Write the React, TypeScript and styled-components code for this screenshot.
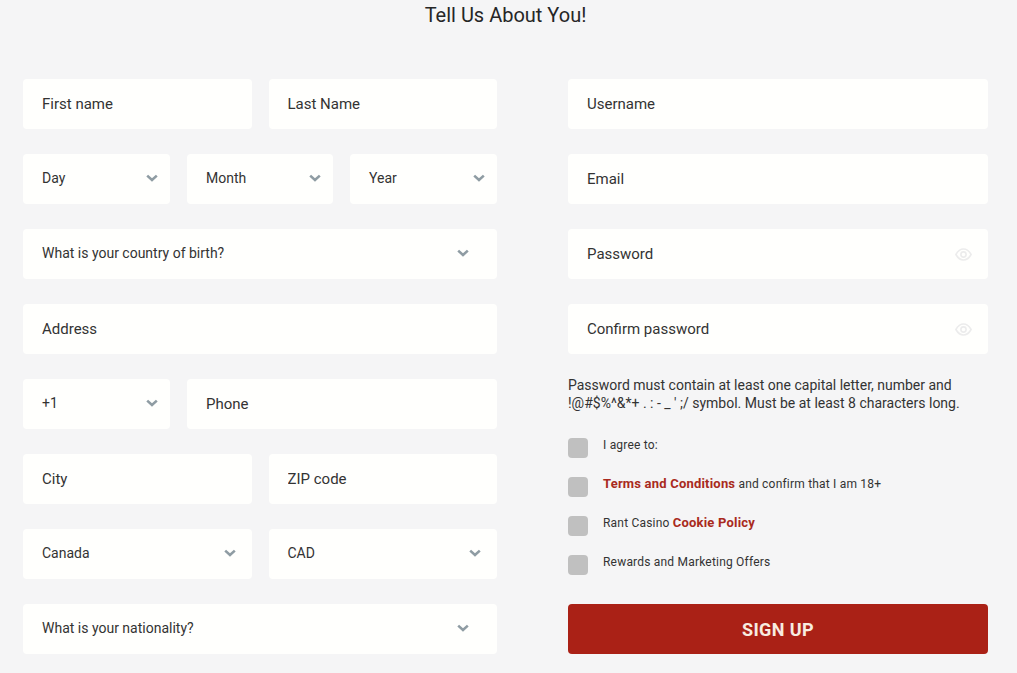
import React from "react";
import styled, { createGlobalStyle } from "styled-components";

const Global = createGlobalStyle`
  html, body { margin: 0; padding: 0; background: #f5f5f6; }
  body { font-family: Roboto, "Liberation Sans", sans-serif; color: #333; }
  * { box-sizing: border-box; }
`;

const Page = styled.div`
  width: 1017px;
  height: 673px;
  overflow: hidden;
  background: #f5f5f6;
`;

const Title = styled.h1`
  margin: 0;
  height: 79px;
  padding: 3px 0 0 0;
  width: 1011px;
  text-align: center;
  font-size: 20px;
  line-height: 24px;
  font-weight: 400;
  color: #262626;
`;

const Columns = styled.form`
  display: grid;
  grid-template-columns: 474px 420px;
  column-gap: 71px;
  padding-left: 23px;
`;

const Stack = styled.div`
  display: flex;
  flex-direction: column;
  gap: 25px;
`;

const Row = styled.div<{ $cols: string }>`
  display: grid;
  grid-template-columns: ${(p) => p.$cols};
  column-gap: 17px;
`;

const InputBox = styled.label`
  position: relative;
  display: flex;
  align-items: center;
  height: 50px;
  background: #fffffd;
  border-radius: 4px;
`;

const TextInput = styled.input`
  width: 100%;
  height: 100%;
  padding: 0 19px;
  border: 0;
  outline: 0;
  background: transparent;
  font-family: Roboto, "Liberation Sans", sans-serif;
  font-size: 15px;
  color: #333;
  &::placeholder { color: #333; opacity: 1; }
`;

const SelectBox = styled.div<{ $arrow: number }>`
  display: flex;
  align-items: center;
  justify-content: space-between;
  height: 50px;
  padding: 0 ${(p) => p.$arrow}px 2px 19px;
  background: #fffffd;
  border-radius: 4px;
  font-size: 14px;
  color: #333;
`;

const EyeSlot = styled.span`
  position: absolute;
  right: 16.5px;
  top: 19px;
  display: flex;
`;

const Hint = styled.p`
  margin: 22px 0 0;
  font-size: 14px;
  line-height: 18px;
  color: #333;
  white-space: nowrap;
`;

const Checks = styled.div`
  display: flex;
  flex-direction: column;
  gap: 19px;
  margin-top: 26px;
`;

const CheckRow = styled.div`
  display: flex;
  align-items: flex-start;
  gap: 15px;
  height: 20px;
`;

const Box = styled.span`
  flex: none;
  width: 20px;
  height: 20px;
  border-radius: 4px;
  background: #c0c0c0;
`;

const CheckText = styled.span`
  font-size: 12px;
  line-height: 14px;
  letter-spacing: 0.2px;
  color: #333;
`;

const Strong = styled.b`
  font-size: 13px;
  font-weight: 700;
  color: #a92a20;
`;

const SignUp = styled.button`
  margin-top: 29px;
  width: 100%;
  height: 50px;
  border: 0;
  border-radius: 4px;
  background: #aa2116;
  color: #f8ece0;
  font-family: Roboto, "Liberation Sans", sans-serif;
  font-size: 18px;
  font-weight: 700;
  letter-spacing: 0.4px;
`;

const Chevron = () => (
  <svg width="12" height="8" viewBox="0 0 12 8" fill="none">
    <path d="M1.2 1.600 6 6l4.800-4.400" stroke="#8f9ca3" strokeWidth="2.600" />
  </svg>
);

const Eye = () => (
  <svg width="17" height="13" viewBox="0 0 17 13" fill="none" stroke="#ececec" strokeWidth="1.600">
    <path d="M.9 6.500C3 2.800 5.600 1 8.500 1s5.500 1.800 7.600 5.500C14 10.200 11.400 12 8.500 12S3 10.200.9 6.500Z" />
    <circle cx="8.500" cy="6.500" r="2.600" />
  </svg>
);

const Field = ({ label, eye }: { label: string; eye?: boolean }) => (
  <InputBox>
    <TextInput placeholder={label} />
    {eye && (
      <EyeSlot>
        <Eye />
      </EyeSlot>
    )}
  </InputBox>
);

const Select = ({ label, arrow = 12 }: { label: string; arrow?: number }) => (
  <SelectBox $arrow={arrow}>
    {label}
    <Chevron />
  </SelectBox>
);

export default function App() {
  return (
    <Page>
      <Global />
      <Title>Tell Us About You!</Title>
      <Columns>
        <Stack>
          <Row $cols="228.5px 228.5px">
            <Field label="First name" />
            <Field label="Last Name" />
          </Row>
          <Row $cols="147px 146px 147px">
            <Select label="Day" />
            <Select label="Month" />
            <Select label="Year" />
          </Row>
          <Select label="What is your country of birth?" arrow={28} />
          <Field label="Address" />
          <Row $cols="147px 310px">
            <Select label="+1" />
            <Field label="Phone" />
          </Row>
          <Row $cols="228.5px 228.5px">
            <Field label="City" />
            <Field label="ZIP code" />
          </Row>
          <Row $cols="228.5px 228.5px">
            <Select label="Canada" arrow={16} />
            <Select label="CAD" arrow={16} />
          </Row>
          <Select label="What is your nationality?" arrow={28} />
        </Stack>
        <div>
          <Stack>
            <Field label="Username" />
            <Field label="Email" />
            <Field label="Password" eye />
            <Field label="Confirm password" eye />
          </Stack>
          <Hint>
            Password must contain at least one capital letter, number and
            <br />
            !@#$%^&amp;*+ . : - _ ' ;/ symbol. Must be at least 8 characters long.
          </Hint>
          <Checks>
            <CheckRow>
              <Box />
              <CheckText>I agree to:</CheckText>
            </CheckRow>
            <CheckRow>
              <Box />
              <CheckText>
                <Strong>Terms and Conditions</Strong> and confirm that I am 18+
              </CheckText>
            </CheckRow>
            <CheckRow>
              <Box />
              <CheckText>
                Rant Casino <Strong>Cookie Policy</Strong>
              </CheckText>
            </CheckRow>
            <CheckRow>
              <Box />
              <CheckText>Rewards and Marketing Offers</CheckText>
            </CheckRow>
          </Checks>
          <SignUp type="button">SIGN UP</SignUp>
        </div>
      </Columns>
    </Page>
  );
}
